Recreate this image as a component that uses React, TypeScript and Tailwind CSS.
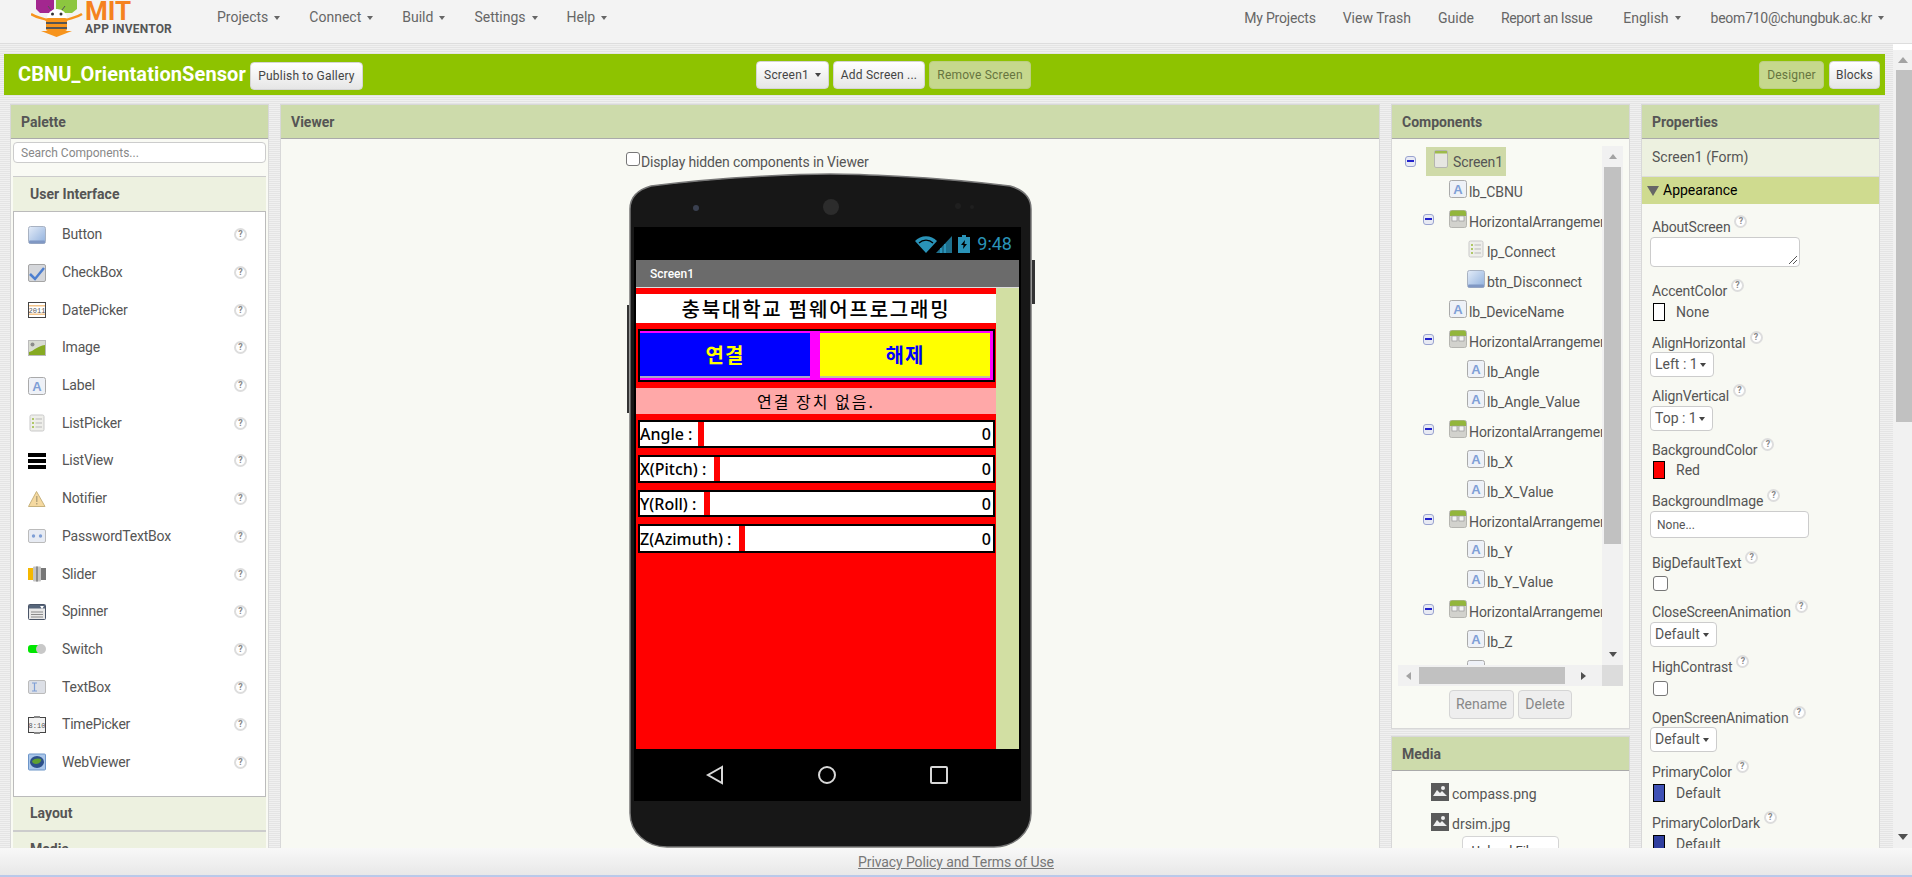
import type { ReactNode } from "react";

const TEXTURE =
  "bg-[#ececec] bg-[repeating-linear-gradient(0deg,#e4e4e4_0,#e4e4e4_1px,#f0f0f0_1px,#f0f0f0_2px)]";

function Caret({ color = "border-t-[#666666]" }: { color?: string }) {
  return (
    <span
      className={`inline-block w-0 h-0 border-x-[3px] border-x-transparent border-t-[4px] ${color}`}
    />
  );
}

function Help({ className = "" }: { className?: string }) {
  return (
    <span
      className={`inline-flex items-center justify-center w-[13px] h-[13px] rounded-full border-2 border-[#dddddd] bg-white text-[9px] font-bold leading-none tracking-normal text-[#888888] ${className}`}
    >
      ?
    </span>
  );
}

function Logo() {
  return (
    <svg width="52" height="37" viewBox="0 0 52 37" className="shrink-0">
      <path d="M5 0h18v9l-4 4H9L5 9z" fill="#a3278f" />
      <path d="M25 0h21v9l-5 4H30l-5-4z" fill="#8cc63f" />
      <path d="M0 14C6 18 11 18 16 20M51 14C45 18 40 18 35 20" fill="none" stroke="#f7941d" strokeWidth="2.5" />
      <path d="M16 18a10 9 0 0120 0z" fill="#ffffff" />
      <circle cx="21.500" cy="14" r="1.500" fill="#333333" />
      <circle cx="30" cy="14" r="1.500" fill="#333333" />
      <path d="M20 10l-3-4M31 10l3-4" stroke="#555555" strokeWidth="1" />
      <rect x="15" y="18" width="21" height="13" rx="2" fill="#f7941d" />
      <path d="M15 22h21v2H15zM15 27h21v2H15z" fill="#555555" />
      <path d="M10 31h31l-15.500 6z" fill="#f7941d" />
    </svg>
  );
}

// palette and tree icons
function PaletteIcon({ name }: { name: string }) {
  switch (name) {
    case "Button":
      return (
        <svg width="18" height="18" viewBox="0 0 18 18">
          <defs>
            <linearGradient id="btnGrad" x1="0" y1="0" x2="1" y2="1">
              <stop offset="0" stopColor="#e4ecf8" />
              <stop offset="1" stopColor="#8fb0dd" />
            </linearGradient>
          </defs>
          <rect x="0.5" y="0.5" width="17" height="17" rx="2" fill="url(#btnGrad)" stroke="#a8b2c2" />
          <rect x="1" y="14.5" width="16" height="3" rx="1" fill="#8098c4" />
        </svg>
      );
    case "CheckBox":
      return (
        <svg width="18" height="18" viewBox="0 0 18 18">
          <rect x="0.5" y="0.5" width="17" height="17" rx="1.5" fill="#d5d7db" stroke="#a5a5a5" />
          <path d="M2 10l5 5 9-11" fill="none" stroke="#4d7fd0" strokeWidth="2.5" />
        </svg>
      );
    case "DatePicker":
      return (
        <svg width="18" height="18" viewBox="0 0 18 18">
          <rect x="0.5" y="1.500" width="17" height="15" fill="#ffffff" stroke="#444444" />
          <rect x="1" y="4" width="16" height="1.500" fill="#f3c48a" />
          <rect x="1" y="12.500" width="16" height="1.500" fill="#f3c48a" />
          <text x="9" y="12" textAnchor="middle" fontSize="7" fill="#555555" fontFamily="Liberation Mono, monospace">
            2011
          </text>
        </svg>
      );
    case "Image":
      return (
        <svg width="18" height="18" viewBox="0 0 18 18">
          <rect x="0.5" y="1.500" width="17" height="15" fill="#d9dcd4" stroke="#bbbbbb" />
          <circle cx="4.500" cy="5.500" r="2" fill="#8b8b8b" />
          <path d="M1 13c5-1 8-6 16-7v10H1z" fill="#86aa22" />
        </svg>
      );
    case "Label":
      return (
        <svg width="18" height="18" viewBox="0 0 18 18">
          <rect x="0.5" y="0.5" width="17" height="17" rx="2" fill="#eef1f7" stroke="#aaaaaa" />
          <text x="9" y="14" textAnchor="middle" fontSize="13" fontWeight="700" fill="#7f9fd6" fontFamily="Liberation Sans, sans-serif">
            A
          </text>
        </svg>
      );
    case "ListPicker":
      return (
        <svg width="18" height="18" viewBox="0 0 18 18">
          <rect x="2" y="1" width="14" height="16" rx="1.500" fill="#eeeeea" stroke="#c9c9c9" />
          <path d="M4 5h2M4 9h2M4 13h2" stroke="#9bbb3c" strokeWidth="1.500" />
          <path d="M7.500 5h6.500M7.500 9h6.500M7.500 13h6.500" stroke="#b9b9b9" strokeWidth="1" />
        </svg>
      );
    case "ListView":
      return (
        <svg width="18" height="18" viewBox="0 0 18 18">
          <rect x="0" y="1" width="18" height="4" fill="#000000" />
          <rect x="0" y="7" width="18" height="4" fill="#000000" />
          <rect x="0" y="13" width="18" height="4" fill="#000000" />
        </svg>
      );
    case "Notifier":
      return (
        <svg width="18" height="18" viewBox="0 0 18 18">
          <path d="M8.500 1.500L17 16.500H0.5z" fill="#f5d9a0" stroke="#c7b27c" />
          <rect x="8" y="6" width="1.500" height="6" fill="#b9a77c" />
          <rect x="8" y="13" width="1.500" height="1.500" fill="#b9a77c" />
        </svg>
      );
    case "PasswordTextBox":
      return (
        <svg width="18" height="18" viewBox="0 0 18 18">
          <rect x="0.5" y="2.500" width="17" height="13" rx="1.500" fill="#e7ebf3" stroke="#bbbbbb" />
          <circle cx="5.500" cy="9" r="1.700" fill="#7f9fd6" />
          <circle cx="12.500" cy="9" r="1.700" fill="#7f9fd6" />
        </svg>
      );
    case "Slider":
      return (
        <svg width="18" height="18" viewBox="0 0 18 18">
          <rect x="0" y="3" width="7" height="12" fill="#f5b800" />
          <rect x="7" y="3" width="11" height="12" fill="#777777" />
          <rect x="5" y="1.500" width="8" height="15" rx="1" fill="#c4c4c4" />
          <rect x="8" y="1.500" width="2" height="15" fill="#8c8c8c" />
        </svg>
      );
    case "Spinner":
      return (
        <svg width="18" height="18" viewBox="0 0 18 18">
          <rect x="0.5" y="1.500" width="17" height="15" rx="1" fill="#e8e8e8" stroke="#4a5568" />
          <rect x="1" y="2" width="16" height="3.500" fill="#56657a" />
          <path d="M12 3h4l-2 3z" fill="#ffffff" />
          <path d="M3 9h12M3 11.500h12M3 14h12" stroke="#8a8a8a" />
        </svg>
      );
    case "Switch":
      return (
        <svg width="18" height="18" viewBox="0 0 18 18">
          <rect x="0" y="5" width="14" height="8" rx="3" fill="#00e600" />
          <circle cx="13" cy="9" r="5" fill="#c8c8c8" />
        </svg>
      );
    case "TextBox":
      return (
        <svg width="18" height="18" viewBox="0 0 18 18">
          <rect x="0.5" y="2.500" width="17" height="13" rx="1.500" fill="#dcdfe6" stroke="#bbbbbb" />
          <path d="M4 5h5M6.500 5v8M4 13h5" stroke="#7f9fd6" strokeWidth="1.200" fill="none" />
        </svg>
      );
    case "TimePicker":
      return (
        <svg width="18" height="18" viewBox="0 0 18 18">
          <rect x="0.5" y="1.500" width="17" height="15" fill="#f2f2f2" stroke="#444444" />
          <rect x="6" y="0" width="6" height="2" fill="#888888" />
          <rect x="6" y="16" width="6" height="2" fill="#888888" />
          <text x="9" y="12" textAnchor="middle" fontSize="7" fill="#555555" fontFamily="Liberation Mono, monospace">
            8:10
          </text>
        </svg>
      );
    case "WebViewer":
      return (
        <svg width="18" height="18" viewBox="0 0 18 18">
          <rect x="0.5" y="1" width="17" height="16" rx="1" fill="#a9c6ea" stroke="#6d95c8" />
          <ellipse cx="9" cy="9" rx="7" ry="6" fill="#2d4f8a" />
          <path d="M4 8c2-3 7-3 9-2 1 2-2 5-5 5-2 0-4-1-4-3z" fill="#5fa030" />
        </svg>
      );
    case "Arrangement":
      return (
        <svg width="18" height="18" viewBox="0 0 18 18">
          <rect x="0.5" y="0.5" width="17" height="17" rx="2" fill="#d2d2cd" stroke="#b5b5b0" />
          <path d="M1 2.500a2 2 0 012-2h12a2 2 0 012 2V6H1z" fill="#93b63c" />
          <rect x="3" y="6" width="5" height="5" fill="#f4f4f4" stroke="#999999" strokeWidth="0.7" />
          <rect x="10" y="6" width="5" height="5" fill="#f4f4f4" stroke="#999999" strokeWidth="0.7" />
        </svg>
      );
    case "Form":
      return (
        <svg width="14" height="18" viewBox="0 0 14 18">
          <rect x="0.5" y="0.5" width="13" height="17" rx="1.500" fill="#e6e6e1" stroke="#b5b5b0" />
          <rect x="1" y="1" width="12" height="2.500" fill="#9dbb4a" />
        </svg>
      );
    default:
      return null;
  }
}

function Collapse() {
  return (
    <span className="flex items-center justify-center w-[11px] h-[11px] rounded-[3px] border border-[#9aa3d0] bg-[#e8eaf4] shrink-0">
      <span className="block w-[7px] h-[2px] bg-[#2222cc]" />
    </span>
  );
}

function MediaIcon() {
  return (
    <svg width="18" height="18" viewBox="0 0 18 18" className="shrink-0 mb-[4px]">
      <rect width="18" height="18" fill="#5a5a5a" />
      <path d="M2 13l4-6 3 3 2-2 5 5z" fill="#f0f0f0" />
      <circle cx="12" cy="5" r="2" fill="#f0f0f0" />
    </svg>
  );
}

function Swatch({ color }: { color: string }) {
  return <span className={`block w-[12px] h-[18px] border border-black ${color}`} />;
}

function Select({ label, width }: { label: string; width: string }) {
  return (
    <div
      className={`flex items-center justify-between h-[25px] pl-[4px] pr-[7px] rounded-[4px] border border-[#cccccc] bg-white ${width}`}
    >
      <span>{label}</span>
      <Caret color="border-t-[#444444]" />
    </div>
  );
}

function Checkbox() {
  return <span className="block ml-[3px] w-[15px] h-[15px] rounded-[3px] border border-[#777777] bg-white" />;
}

function ColorField({ color, label }: { color: string; label: string }) {
  return (
    <div className="flex items-center h-[18px] gap-[11px] pl-[3px]">
      <Swatch color={color} />
      <span>{label}</span>
    </div>
  );
}

const PALETTE = [
  "Button",
  "CheckBox",
  "DatePicker",
  "Image",
  "Label",
  "ListPicker",
  "ListView",
  "Notifier",
  "PasswordTextBox",
  "Slider",
  "Spinner",
  "Switch",
  "TextBox",
  "TimePicker",
  "WebViewer",
];

const TREE = [
  { label: "lb_CBNU", icon: "Label", pad: "pl-[51px]" },
  { label: "HorizontalArrangement1", icon: "Arrangement", pad: "pl-[25px]", open: true },
  { label: "lp_Connect", icon: "ListPicker", pad: "pl-[69px]" },
  { label: "btn_Disconnect", icon: "Button", pad: "pl-[69px]" },
  { label: "lb_DeviceName", icon: "Label", pad: "pl-[51px]" },
  { label: "HorizontalArrangement2", icon: "Arrangement", pad: "pl-[25px]", open: true },
  { label: "lb_Angle", icon: "Label", pad: "pl-[69px]" },
  { label: "lb_Angle_Value", icon: "Label", pad: "pl-[69px]" },
  { label: "HorizontalArrangement3", icon: "Arrangement", pad: "pl-[25px]", open: true },
  { label: "lb_X", icon: "Label", pad: "pl-[69px]" },
  { label: "lb_X_Value", icon: "Label", pad: "pl-[69px]" },
  { label: "HorizontalArrangement4", icon: "Arrangement", pad: "pl-[25px]", open: true },
  { label: "lb_Y", icon: "Label", pad: "pl-[69px]" },
  { label: "lb_Y_Value", icon: "Label", pad: "pl-[69px]" },
  { label: "HorizontalArrangement5", icon: "Arrangement", pad: "pl-[25px]", open: true },
  { label: "lb_Z", icon: "Label", pad: "pl-[69px]" },
  { label: "lb_Z_Value", icon: "Label", pad: "pl-[69px]" },
];

const SENSOR_ROWS = [
  { label: "Angle :", labelW: "w-[58px]", h: "h-[28px]", gap: "mt-0" },
  { label: "X(Pitch) :", labelW: "w-[74px]", h: "h-[28px]", gap: "mt-[7px]" },
  { label: "Y(Roll) :", labelW: "w-[64px]", h: "h-[27px]", gap: "mt-[7px]" },
  { label: "Z(Azimuth) :", labelW: "w-[99px]", h: "h-[29px]", gap: "mt-[7px]" },
];

function Field({ name, className, children }: { name: string; className: string; children?: ReactNode }) {
  return (
    <div className={className}>
      <div className="h-[20px] pl-[10px] leading-[20px] whitespace-nowrap tracking-[-0.15px]">
        {name}
        <Help className="ml-[4px] -translate-y-[8px]" />
      </div>
      {children}
    </div>
  );
}

function TopButton({ children, dim }: { children: ReactNode; dim?: boolean }) {
  return (
    <div
      className={`flex items-center justify-center h-[28px] rounded-[4px] text-[12px] tracking-[0.2px] ${
        dim
          ? "bg-[#c6d88d] text-[#66753f] border border-[#bccf82]"
          : "bg-gradient-to-b from-white to-[#e6e6e6] text-[#444444] border border-[#d5d5d5]"
      }`}
    >
      {children}
    </div>
  );
}

function PanelHead({ title }: { title: string }) {
  return (
    <div className="h-[34px] shrink-0 pl-[10px] pt-[2px] flex items-center bg-[#cddbab] border-b border-[#aaaaaa] text-[14px] font-bold text-[#555555]">
      {title}
    </div>
  );
}

function Phone() {
  return (
    <div className="relative w-[403px] h-[675px] shrink-0 mt-px ml-[348px]">
      {/* body */}
      <svg width="403" height="675" viewBox="0 0 403 675" className="absolute inset-0">
        <path
          d="M1 36C1 24 8 17 22 13C100 3 180 1 201 1C222 1 300 3 381 13C395 17 402 24 402 36V640C402 660 385 674 365 674H38C18 674 1 660 1 640Z"
          fill="#171717"
          stroke="#777777"
          strokeWidth="1.500"
        />
        <circle cx="67" cy="35" r="3" fill="#3a4050" />
        <circle cx="202" cy="34" r="8" fill="#2c2c2c" />
        <circle cx="329" cy="33" r="3" fill="#1f1f1f" />
        <circle cx="343" cy="34" r="2" fill="#1f1f1f" />
      </svg>
      {/* side buttons */}
      <div className="absolute -left-[2px] top-[132px] w-[2px] h-[108px] bg-[#333333]" />
      <div className="absolute -right-[3px] top-[87px] w-[3px] h-[44px] bg-[#333333]" />

      <div className="relative pt-[54px] pl-[5px]">
        <div className="w-[387px] bg-black">
          <div className="h-[33px] flex items-center justify-end gap-[6px] pr-[9px]">
            <svg width="37" height="18" viewBox="0 0 37 18">
              <path d="M0 6a15 15 0 0122 0l-11 12z" fill="#2a93b8" />
              <path d="M4 8a10 10 0 0114 0" fill="none" stroke="#000000" strokeWidth="1.300" />
              <path d="M21 18L37 1v17z" fill="#1e6f8c" />
              <path d="M26 18v-5M30 18v-9" stroke="#2a93b8" strokeWidth="2" />
            </svg>
            <svg width="12" height="18" viewBox="0 0 12 18">
              <path d="M4 0h4v2h4v16H0V2h4z" fill="#2a93b8" />
              <path d="M7 5L3 10h2.500L5 14l4-5H6.500z" fill="#000000" />
            </svg>
            <span className="text-[18px] leading-none text-[#2a93b8] ml-[1px]">9:48</span>
          </div>
          <div className="mx-[2px] w-[383px]">
            <div className="h-[28px] flex items-center pl-[14px] bg-[#6b6b6b] border-b border-[#dddddd] text-[12px] font-medium text-white">
              Screen1
            </div>
            <div className="flex h-[461px] font-['Noto_Sans','Noto_Sans_CJK_KR',sans-serif] text-black">
              <div className="w-[360px] bg-[#ff0000] pt-[6px]">
                <div className="h-[29px] bg-white flex items-center justify-center font-['Noto_Sans_CJK_KR',sans-serif] text-[20px] font-medium tracking-[1.8px]">
                  충북대학교 펌웨어프로그래밍
                </div>
                <div className="mt-[6px] ml-[2px] w-[357px] h-[53px] border-2 border-black bg-[#ff00ff] flex gap-[10px] py-[2px] pl-0 pr-[3px] font-['Noto_Sans_CJK_KR',sans-serif] text-[20px] font-bold tracking-[1px]">
                  <div className="w-[170px] bg-[#0000ff] border-b-2 border-[#a8a8c8] flex items-center justify-center text-[#ffff00]">
                    연결
                  </div>
                  <div className="w-[170px] bg-[#ffff00] border-b-2 border-[#c0c0a0] flex items-center justify-center text-[#0000ff]">
                    해제
                  </div>
                </div>
                <div className="mt-[6px] h-[26px] bg-[#ffa8a8] flex items-center justify-center font-['Noto_Sans_CJK_KR',sans-serif] text-[16px] tracking-[2px]">
                  연결 장치 없음.
                </div>
                <div className="mt-[6px] ml-[2px] w-[357px]">
                  {SENSOR_ROWS.map((row) => (
                    <div
                      key={row.label}
                      className={`flex border-2 border-black bg-[#ff0000] box-border ${row.h} ${row.gap}`}
                    >
                      <div className={`bg-white text-[16px] font-medium flex items-center whitespace-nowrap ${row.labelW}`}>
                        {row.label}
                      </div>
                      <div className="flex-1 ml-[6px] bg-white flex items-center justify-end pr-[2px] text-[16px] font-medium">
                        0
                      </div>
                    </div>
                  ))}
                </div>
              </div>
              <div className="flex-1 bg-[#d2dfa3]" />
            </div>
          </div>
          <div className="h-[52px] flex items-center justify-center gap-[92px] pr-[1px]">
            <svg width="20" height="20" viewBox="0 0 20 20">
              <path d="M17 2L3 10l14 8z" fill="none" stroke="#d8d8d8" strokeWidth="2" />
            </svg>
            <svg width="20" height="20" viewBox="0 0 20 20">
              <circle cx="10" cy="10" r="8" fill="none" stroke="#d8d8d8" strokeWidth="2" />
            </svg>
            <svg width="20" height="20" viewBox="0 0 20 20">
              <rect x="2" y="2" width="16" height="16" rx="1" fill="none" stroke="#d8d8d8" strokeWidth="2" />
            </svg>
          </div>
        </div>
      </div>
    </div>
  );
}

export default function App() {
  return (
    <div className="h-screen w-full overflow-hidden flex flex-col font-['Roboto',sans-serif] text-[14px] text-[#555555]">
      <div className="flex-1 min-h-0 flex flex-col">
        {/* Top bar */}
        <header className="h-[44px] shrink-0 flex items-start bg-[#f3f3f3] border-b border-[#dddddd] overflow-hidden">
          <div className="flex pl-[31px] w-[217px] shrink-0">
            <Logo />
            <div className="ml-[2px] flex flex-col">
              <span className="mt-px text-[26px] font-bold leading-[20px] text-[#f58220]">MIT</span>
              <span className="mt-[2px] text-[12px] font-bold leading-[12px] tracking-[0.2px] text-[#555555] whitespace-nowrap">
                APP INVENTOR
              </span>
            </div>
          </div>
          <nav className="flex h-[35px] items-center gap-[29px] text-[#666666]">
            {["Projects", "Connect", "Build", "Settings", "Help"].map((item) => (
              <span key={item} className="flex items-center gap-[6px]">
                {item}
                <Caret />
              </span>
            ))}
          </nav>
          <nav className="ml-auto flex h-[36px] items-center gap-[27px] pr-[28px] text-[#666666]">
            <span className="tracking-[-0.2px]">My Projects</span>
            <span>View Trash</span>
            <span>Guide</span>
            <span className="tracking-[-0.4px]">Report an Issue</span>
            <span className="ml-[4px] flex items-center gap-[6px]">
              English
              <Caret />
            </span>
            <span className="ml-[3px] flex items-center gap-[6px] tracking-[-0.25px]">
              beom710@chungbuk.ac.kr
              <Caret />
            </span>
          </nav>
        </header>

        <div className="flex-1 min-h-0 flex">
          <div className={`w-[1893px] shrink-0 overflow-hidden flex flex-col ${TEXTURE}`}>
            {/* Project toolbar */}
            <div className="ml-[4px] mt-[10px] w-[1881px] h-[41px] shrink-0 flex items-center bg-[#8ec300]">
              <span className="pl-[14px] w-[246px] shrink-0 text-[20px] font-bold tracking-[0.1px] text-white whitespace-nowrap -translate-y-[1px]">
                CBNU_OrientationSensor
              </span>
              <div className="w-[113px] translate-y-[1px]">
                <TopButton>Publish to Gallery</TopButton>
              </div>
              <div className="flex ml-[393px] gap-[4px]">
                <div className="w-[73px]">
                  <TopButton>
                    <span className="flex items-center gap-[6px]">
                      Screen1
                      <Caret color="border-t-[#444444]" />
                    </span>
                  </TopButton>
                </div>
                <div className="w-[92px]">
                  <TopButton>Add Screen ...</TopButton>
                </div>
                <div className="w-[102px]">
                  <TopButton dim>Remove Screen</TopButton>
                </div>
              </div>
              <div className="flex ml-auto gap-[5px] pr-[5px]">
                <div className="w-[65px]">
                  <TopButton dim>Designer</TopButton>
                </div>
                <div className="w-[51px]">
                  <TopButton>Blocks</TopButton>
                </div>
              </div>
            </div>

            {/* Panels */}
            <div className="flex-1 min-h-0 mt-[9px] pl-[10px] flex gap-[11px] overflow-hidden">
              {/* Palette */}
              <section className="w-[259px] h-[760px] shrink-0 flex flex-col border border-[#d8d8d8] bg-[#f9faf4]">
                <PanelHead title="Palette" />
                <div className="mx-[2px] mt-[3px] h-[21px] shrink-0 pl-[7px] flex items-center rounded-[4px] border border-[#cccccc] bg-white text-[12px] text-[#888888]">
                  Search Components...
                </div>
                <div className="mx-[2px] mt-[13px] h-[35px] shrink-0 pl-[17px] flex items-center bg-[#edf1e0] border-t border-[#cccccc] font-bold">
                  User Interface
                </div>
                <div className="mx-[2px] h-[586px] shrink-0 pt-[4px] bg-white border border-[#bbbbbb]">
                  {PALETTE.map((name) => (
                    <div key={name} className="h-[37.7px] flex items-center pl-[14px] pr-[18px]">
                      <span className="block w-[18px] h-[18px]">
                        <PaletteIcon name={name} />
                      </span>
                      <span className="ml-[16px] flex-1 tracking-[-0.2px]">{name}</span>
                      <Help />
                    </div>
                  ))}
                </div>
                <div className="mx-[2px] h-[35px] shrink-0 pl-[17px] flex items-center bg-[#edf1e0] border-b-2 border-[#cccccc] font-bold">
                  Layout
                </div>
                <div className="mx-[2px] h-[35px] shrink-0 pl-[17px] flex items-center bg-[#edf1e0] font-bold">
                  Media
                </div>
              </section>

              {/* Viewer */}
              <section className="w-[1100px] h-[760px] shrink-0 flex flex-col border border-[#d8d8d8] bg-[#f8f9f3]">
                <PanelHead title="Viewer" />
                <div className="mt-[13px] ml-[345px] h-[20px] flex items-start whitespace-nowrap">
                  <span className="block w-[14px] h-[14px] rounded-[3px] border border-[#777777] bg-white" />
                  <span className="ml-px leading-[20px] tracking-[-0.15px]">Display hidden components in Viewer</span>
                </div>
                <Phone />
              </section>

              {/* Components + Media */}
              <div className="w-[239px] h-[760px] shrink-0 flex flex-col">
                <section className="h-[625px] shrink-0 flex flex-col border border-[#d8d8d8] bg-[#f9faf4]">
                  <PanelHead title="Components" />
                  <div className="mt-[7px] ml-[6px] w-[225px] h-[540px] flex flex-col">
                    <div className="flex h-[519px]">
                      <div className="w-[204px] overflow-hidden whitespace-nowrap tracking-[-0.1px]">
                        <div className="h-[30px] flex items-center pl-[7px]">
                          <Collapse />
                          <div className="ml-[10px] w-[80px] h-[29px] flex items-center pl-[8px] bg-[#cfdaa8]">
                            <span className="mb-[4px] h-[18px] block">
                              <PaletteIcon name="Form" />
                            </span>
                            <span className="ml-[5px] pt-[3px]">Screen1</span>
                          </div>
                        </div>
                        {TREE.map((node) => (
                          <div key={node.label} className={`h-[30px] flex items-center ${node.pad}`}>
                            {node.open && (
                              <span className="mr-[15px] mb-[4px]">
                                <Collapse />
                              </span>
                            )}
                            <span className="block w-[18px] h-[18px] mb-[4px] shrink-0">
                              <PaletteIcon name={node.icon} />
                            </span>
                            <span className="ml-[2px] pt-[2px]">{node.label}</span>
                          </div>
                        ))}
                      </div>
                      <div className="w-[21px] flex flex-col bg-[#f1f1f1]">
                        <div className="h-[21px] flex items-center justify-center">
                          <span className="w-0 h-0 border-x-[4px] border-x-transparent border-b-[5px] border-b-[#a3a3a3]" />
                        </div>
                        <div className="mx-[2px] h-[377px] bg-[#c1c1c1]" />
                        <div className="flex-1 flex items-end justify-center pb-[8px]">
                          <span className="w-0 h-0 border-x-[4px] border-x-transparent border-t-[5px] border-t-[#505050]" />
                        </div>
                      </div>
                    </div>
                    <div className="flex h-[21px]">
                      <div className="w-[204px] flex items-center bg-[#f1f1f1]">
                        <div className="w-[21px] flex items-center justify-center">
                          <span className="w-0 h-0 border-y-[4px] border-y-transparent border-r-[5px] border-r-[#a3a3a3]" />
                        </div>
                        <div className="w-[146px] h-[17px] bg-[#c1c1c1]" />
                        <div className="flex-1 flex items-center justify-center">
                          <span className="w-0 h-0 border-y-[4px] border-y-transparent border-l-[5px] border-l-[#505050]" />
                        </div>
                      </div>
                      <div className="w-[21px] bg-[#dcdcdc]" />
                    </div>
                  </div>
                  <div className="mt-[4px] ml-[57px] flex gap-[4px] text-[#888888]">
                    <div className="w-[65px] h-[29px] flex items-center justify-center rounded-[4px] border border-[#d5d5d5] bg-[#eeeeee]">
                      Rename
                    </div>
                    <div className="w-[54px] h-[29px] flex items-center justify-center rounded-[4px] border border-[#d5d5d5] bg-[#eeeeee]">
                      Delete
                    </div>
                  </div>
                </section>
                <section className="mt-[7px] flex-1 border border-[#d8d8d8] bg-[#f9faf4]">
                  <PanelHead title="Media" />
                  <div className="pt-[8px] pl-[39px]">
                    {["compass.png", "drsim.jpg"].map((file) => (
                      <div key={file} className="h-[30px] flex items-center gap-[3px]">
                        <MediaIcon />
                        {file}
                      </div>
                    ))}
                  </div>
                  <div className="ml-[70px] mt-[-3px] w-[97px] h-[29px] flex items-center justify-center rounded-[4px] border border-[#d5d5d5] bg-white text-[13px] text-[#444444]">
                    Upload File ...
                  </div>
                </section>
              </div>

              {/* Properties */}
              <section className="w-[239px] h-[760px] shrink-0 border border-[#d8d8d8] bg-[#f8f9f3] overflow-hidden">
                <PanelHead title="Properties" />
                <div className="h-[38px] pl-[10px] flex items-center bg-[#edf1e0] border-b border-[#dddddd]">
                  Screen1 (Form)
                </div>
                <div className="h-[27px] pl-[5px] flex items-center gap-[4px] bg-[#cfdb8f] text-black">
                  <span className="w-0 h-0 border-x-[6px] border-x-transparent border-t-[10px] border-t-[#666666]" />
                  Appearance
                </div>
                <Field name="AboutScreen" className="mt-[13px]">
                  <div className="relative ml-[8px] w-[150px] h-[30px] rounded-[4px] border border-[#cccccc] bg-white">
                    <svg width="10" height="10" viewBox="0 0 10 10" className="absolute right-[1px] bottom-[1px]">
                      <path d="M1 9l8-8M5 9l4-4" stroke="#555555" strokeWidth="1" />
                    </svg>
                  </div>
                </Field>
                <Field name="AccentColor" className="mt-[14px]">
                  <div className="mt-[2px] ml-[8px]">
                    <ColorField color="bg-white" label="None" />
                  </div>
                </Field>
                <Field name="AlignHorizontal" className="mt-[12px]">
                  <div className="mt-[-1px] ml-[8px]">
                    <Select label="Left : 1" width="w-[64px]" />
                  </div>
                </Field>
                <Field name="AlignVertical" className="mt-[9px]">
                  <div className="ml-[8px]">
                    <Select label="Top : 1" width="w-[63px]" />
                  </div>
                </Field>
                <Field name="BackgroundColor" className="mt-[9px]">
                  <div className="mt-[1px] ml-[8px]">
                    <ColorField color="bg-[#ff0000]" label="Red" />
                  </div>
                </Field>
                <Field name="BackgroundImage" className="mt-[12px]">
                  <div className="ml-[8px] w-[159px] h-[27px] pl-[6px] flex items-center rounded-[4px] border border-[#cccccc] bg-white text-[12px]">
                    None...
                  </div>
                </Field>
                <Field name="BigDefaultText" className="mt-[15px]">
                  <div className="mt-[3px] ml-[8px]">
                    <Checkbox />
                  </div>
                </Field>
                <Field name="CloseScreenAnimation" className="mt-[11px]">
                  <div className="ml-[8px]">
                    <Select label="Default" width="w-[67px]" />
                  </div>
                </Field>
                <Field name="HighContrast" className="mt-[10px]">
                  <div className="mt-[4px] ml-[8px]">
                    <Checkbox />
                  </div>
                </Field>
                <Field name="OpenScreenAnimation" className="mt-[12px]">
                  <div className="mt-[-1px] ml-[8px]">
                    <Select label="Default" width="w-[67px]" />
                  </div>
                </Field>
                <Field name="PrimaryColor" className="mt-[10px]">
                  <div className="mt-[2px] ml-[8px]">
                    <ColorField color="bg-[#3f51b5]" label="Default" />
                  </div>
                </Field>
                <Field name="PrimaryColorDark" className="mt-[11px]">
                  <div className="mt-[2px] ml-[8px]">
                    <ColorField color="bg-[#303f9f]" label="Default" />
                  </div>
                </Field>
              </section>
            </div>
          </div>

          {/* Page scrollbar */}
          <div className="flex-1 mt-[6px] flex flex-col bg-[#f1f1f1]">
            <div className="h-[20px] flex items-center justify-center">
              <span className="w-0 h-0 border-x-[5px] border-x-transparent border-b-[6px] border-b-[#a3a3a3]" />
            </div>
            <div className="ml-[3px] h-[352px] bg-[#c1c1c1]" />
            <div className="flex-1 flex items-end justify-center pb-[8px]">
              <span className="w-0 h-0 border-x-[5px] border-x-transparent border-t-[6px] border-t-[#505050]" />
            </div>
          </div>
        </div>
      </div>

      {/* Footer */}
      <footer className="h-[29px] shrink-0 flex items-start justify-center pt-[4px] bg-gradient-to-b from-[#f8f8f8] to-[#e8e8e8] border-b-2 border-[#b9c9ea] text-[#777777] underline tracking-[-0.1px]">
        Privacy Policy and Terms of Use
      </footer>
    </div>
  );
}
